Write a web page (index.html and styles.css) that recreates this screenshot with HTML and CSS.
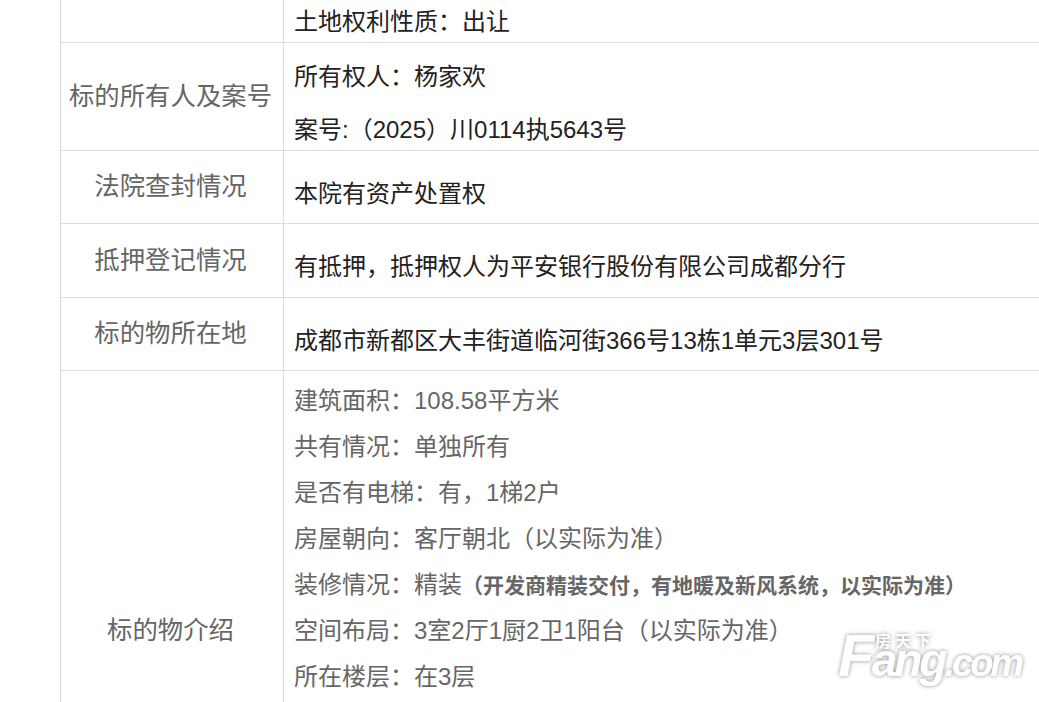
FILE: index.html
```html
<!DOCTYPE html>
<html lang="zh">
<head>
<meta charset="utf-8">
<title>标的物信息</title>
<link rel="stylesheet" href="styles.css">
</head>
<body>
<table class="info">
  <colgroup><col class="c1"><col class="c2"></colgroup>
  <tr class="r0"><td class="label"></td><td class="value"><p>土地权利性质：出让</p></td></tr>
  <tr class="r1"><td class="label"><span class="up4">标的所有人及案号</span></td><td class="value"><p class="own">所有权人：杨家欢</p><p>案号:（2025）川0114执5643号</p></td></tr>
  <tr class="r2"><td class="label"><span class="up4">法院查封情况</span></td><td class="value"><p>本院有资产处置权</p></td></tr>
  <tr class="r3"><td class="label"><span class="up4">抵押登记情况</span></td><td class="value"><p>有抵押，抵押权人为平安银行股份有限公司成都分行</p></td></tr>
  <tr class="r4"><td class="label"><span class="up4">标的物所在地</span></td><td class="value"><p>成都市新都区大丰街道临河街366号13栋1单元3层301号</p></td></tr>
  <tr class="r5"><td class="label">标的物介绍</td><td class="value list">
    <p>建筑面积：108.58平方米</p>
    <p>共有情况：单独所有</p>
    <p>是否有电梯：有，1梯2户</p>
    <p>房屋朝向：客厅朝北（以实际为准）</p>
    <p>装修情况：精装<strong>（开发商精装交付，有地暖及新风系统，以实际为准）</strong></p>
    <p>空间布局：3室2厅1厨2卫1阳台（以实际为准）</p>
    <p>所在楼层：在3层</p>
  </td></tr>
</table>
<div class="mark"><span class="mark-cn">房天下</span><span class="mark-f">F</span><span class="mark-ang">ang</span><span class="mark-com">.com</span></div>
</body>
</html>
```
FILE: styles.css
```css
html, body { margin: 0; padding: 0; height: 702px; overflow: hidden; background: #fff; }
body { font-family: "Liberation Sans", "Noto Sans CJK SC", sans-serif; position: relative; }
.info { border-collapse: collapse; table-layout: fixed; width: 1200px; margin-left: 60px; }
.c1 { width: 223px; }
.c2 { width: 977px; }
.info td { border: 1px solid #ddd; border-top: 0; padding: 0 10px; vertical-align: middle; }
.info tr + tr td { border-top: 1px solid #ddd; }
.info td.label { text-align: center; font-size: 25.4px; color: #666; white-space: nowrap; padding: 0 3px 0 0; }
.up4 { position: relative; top: -3px; }
.value { font-size: 24px; color: #222; }
.value p { margin: 0; line-height: 36px; white-space: nowrap; }
.r0 { height: 42px; }
.r0 .value p { line-height: 40px; padding-top: 2px; }
.r1 { height: 108px; }
.info .r1 td.value { padding-top: 14px; }
.value p.own { margin-bottom: 17px; }
.r2 { height: 73px; }
.r2 .value p { padding-top: 13px; }
.r3 { height: 74px; }
.r3 .value p { padding-top: 13px; }
.r4 { height: 73px; }
.r4 .value p { padding-top: 14px; }
.info td.list { color: #666; padding-top: 7px; vertical-align: top; }
.list p { line-height: 46px; height: 46px; }
.list strong { font-size: 21px; }
.r5 { height: 514px; }
.mark { position: absolute; left: 838px; top: 626px; width: 190px; height: 70px; display: flex; align-items: baseline; color: #fff; font-weight: 700; font-style: italic; line-height: 60px; -webkit-text-stroke: 1.5px #fff; paint-order: stroke fill; text-shadow: 0 0 4px rgba(0,0,0,.45); }
.mark-cn { position: absolute; left: 37px; top: 8px; font-size: 16px; line-height: 16px; font-style: normal; letter-spacing: 4px; -webkit-text-stroke: 0; }
.mark-f { font-size: 60px; letter-spacing: -3px; }
.mark-ang { font-size: 46px; letter-spacing: -3px; }
.mark-com { font-size: 38px; letter-spacing: -3px; }
```
